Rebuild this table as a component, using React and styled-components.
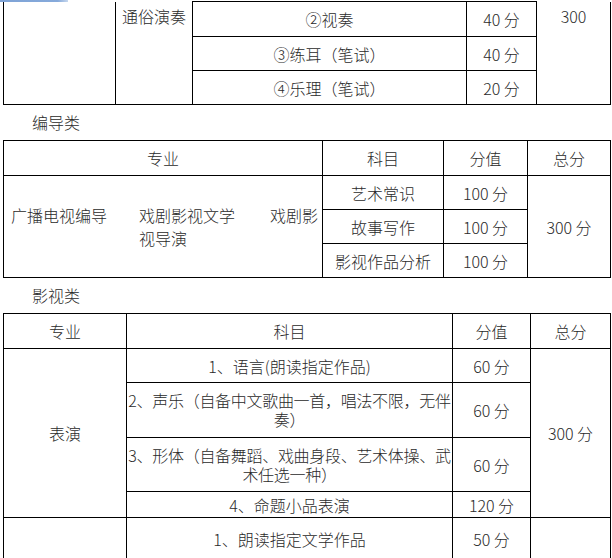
import React from "react";
import styled, { createGlobalStyle } from "styled-components";

const GlobalStyle = createGlobalStyle`
  body {
    margin: 0;
    background: #fff;
    font-family: "Noto Sans CJK SC", "Liberation Sans", sans-serif;
    font-size: 16px;
    font-weight: 300;
    color: #2a2a2a;
  }
`;

const Page = styled.div`
  position: relative;
  padding: 1px 0 0 3px;
  width: 612px;
  height: 558px;
  overflow: hidden;
  box-sizing: border-box;
`;

const TopBar = styled.div`
  position: absolute;
  left: 0;
  top: 0;
  width: 68px;
  height: 2px;
  background: linear-gradient(90deg, #7ea3d6 0%, #86aadb 85%, #c6d7ee 100%);
`;

const Table = styled.table`
  border-collapse: collapse;
  table-layout: fixed;
  width: 607px;
`;

const Row = styled.tr`
  height: ${(p) => p.$h}px;
`;

const Cell = styled.td`
  border: 1px solid #000;
  border-top: ${(p) => (p.$noTop ? "none" : "1px solid #000")};
  padding: ${(p) => p.$pad || "0"};
  text-align: ${(p) => p.$align || "center"};
  vertical-align: ${(p) => p.$valign || "middle"};
  line-height: ${(p) => p.$lh || 20}px;
  letter-spacing: ${(p) => p.$ls || 0}px;
  white-space: ${(p) => (p.$nowrap ? "nowrap" : "normal")};
  overflow: hidden;
`;

const Heading = styled.div`
  height: 35px;
  line-height: 35px;
  padding-left: 29px;
`;

const MajorWrap = styled.div`
  display: flex;
  padding-left: 7px;
`;

const MajorName = styled.div`
  flex: 0 0 128px;
`;

const MajorRest = styled.div`
  flex: 1;
`;

const Gap = styled.span`
  display: inline-block;
  width: 35px;
`;

function Cols({ widths }) {
  return (
    <colgroup>
      {widths.map((w, i) => (
        <col key={i} style={{ width: w }} />
      ))}
    </colgroup>
  );
}

export default function App() {
  return (
    <Page>
      <GlobalStyle />
      <TopBar />

      <Table>
        <Cols widths={[112, 77, 274, 70, 74]} />
        <tbody>
          <Row $h={35}>
            <Cell rowSpan={3} $noTop />
            <Cell rowSpan={3} $noTop $align="left" $valign="top" $pad="3px 6px" $lh={23}>
              通俗演奏
            </Cell>
            <Cell>②视奏</Cell>
            <Cell>40 分</Cell>
            <Cell rowSpan={3} $noTop $valign="top" $pad="3px 0" $lh={23}>
              300
            </Cell>
          </Row>
          <Row $h={34}>
            <Cell>③练耳（笔试）</Cell>
            <Cell>40 分</Cell>
          </Row>
          <Row $h={34}>
            <Cell>④乐理（笔试）</Cell>
            <Cell>20 分</Cell>
          </Row>
        </tbody>
      </Table>

      <Heading>编导类</Heading>

      <Table>
        <Cols widths={[319, 121, 84, 83]} />
        <tbody>
          <Row $h={35}>
            <Cell>专业</Cell>
            <Cell>科目</Cell>
            <Cell>分值</Cell>
            <Cell>总分</Cell>
          </Row>
          <Row $h={34}>
            <Cell rowSpan={3} $align="left" $lh={23}>
              <MajorWrap>
                <MajorName>广播电视编导</MajorName>
                <MajorRest>
                  戏剧影视文学
                  <Gap />
                  戏剧影视导演
                </MajorRest>
              </MajorWrap>
            </Cell>
            <Cell>艺术常识</Cell>
            <Cell>100 分</Cell>
            <Cell rowSpan={3}>300 分</Cell>
          </Row>
          <Row $h={34}>
            <Cell>故事写作</Cell>
            <Cell>100 分</Cell>
          </Row>
          <Row $h={34}>
            <Cell>影视作品分析</Cell>
            <Cell>100 分</Cell>
          </Row>
        </tbody>
      </Table>

      <Heading>影视类</Heading>

      <Table>
        <Cols widths={[123, 326, 78, 80]} />
        <tbody>
          <Row $h={35}>
            <Cell>专业</Cell>
            <Cell>科目</Cell>
            <Cell>分值</Cell>
            <Cell>总分</Cell>
          </Row>
          <Row $h={34}>
            <Cell rowSpan={4}>表演</Cell>
            <Cell>1、语言(朗读指定作品)</Cell>
            <Cell>60 分</Cell>
            <Cell rowSpan={4}>300 分</Cell>
          </Row>
          <Row $h={55}>
            <Cell $lh={19} $ls={-0.3} $nowrap>
              2、声乐（自备中文歌曲一首，唱法不限，无伴
              <br />
              奏）
            </Cell>
            <Cell>60 分</Cell>
          </Row>
          <Row $h={54}>
            <Cell $lh={19} $ls={-0.3} $nowrap>
              3、形体（自备舞蹈、戏曲身段、艺术体操、武
              <br />
              术任选一种）
            </Cell>
            <Cell>60 分</Cell>
          </Row>
          <Row $h={26}>
            <Cell>4、命题小品表演</Cell>
            <Cell>120 分</Cell>
          </Row>
          <Row $h={42}>
            <Cell />
            <Cell>1、朗读指定文学作品</Cell>
            <Cell>50 分</Cell>
            <Cell />
          </Row>
        </tbody>
      </Table>
    </Page>
  );
}
